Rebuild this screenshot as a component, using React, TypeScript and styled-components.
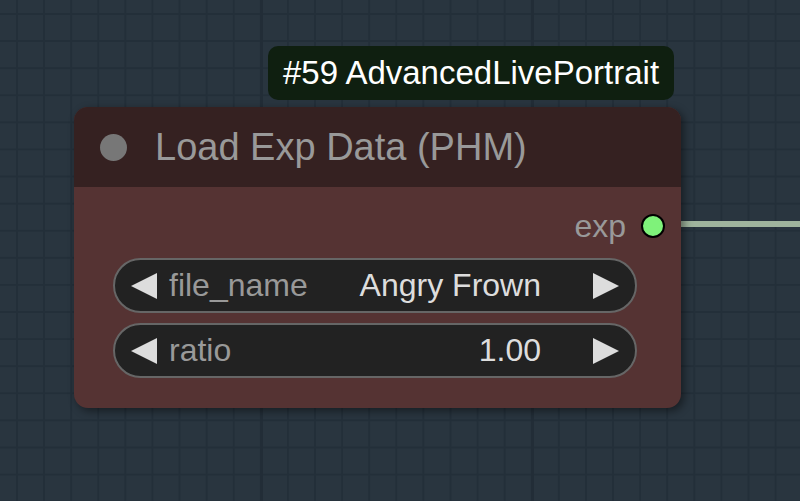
import styled, { createGlobalStyle } from "styled-components";

const GlobalStyle = createGlobalStyle`
  html, body {
    margin: 0;
    padding: 0;
    background: #29353f;
  }
  * {
    box-sizing: border-box;
  }
`;

const Canvas = styled.div`
  position: relative;
  width: 800px;
  height: 501px;
  overflow: hidden;
  font-family: "Liberation Sans", Arial, sans-serif;
  background-color: #29353f;
  background-image:
    linear-gradient(to right, #222d37 0 3px, transparent 3px),
    linear-gradient(to right, #232f39 0 2px, transparent 2px),
    linear-gradient(to bottom, #232f39 0 2px, transparent 2px);
  background-size: 271px 100%, 27.1px 27.1px, 27.1px 27.1px;
  background-position: 260px 0, 16px 0, 0 13px;
`;

const LinkWire = styled.div`
  position: absolute;
  left: 680px;
  top: 221px;
  width: 130px;
  height: 6px;
  background: #9fb49d;
`;

const Badge = styled.div`
  position: absolute;
  left: 268px;
  top: 46px;
  height: 54px;
  padding: 0 15px;
  display: flex;
  align-items: center;
  background: #0f1f10;
  border-radius: 10px;
  color: #ffffff;
  font-size: 33px;
  white-space: nowrap;
`;

const Node = styled.div`
  position: absolute;
  left: 74px;
  top: 107px;
  width: 607px;
  height: 301px;
  display: flex;
  flex-direction: column;
  background: #553333;
  border-radius: 14px;
  box-shadow: 3px 3px 8px rgba(0, 0, 0, 0.45);
  overflow: hidden;
`;

const TitleBar = styled.div`
  height: 80px;
  display: flex;
  align-items: center;
  gap: 28px;
  padding-left: 26px;
  background: #352121;
`;

const TitleDot = styled.span`
  width: 27px;
  height: 27px;
  border-radius: 50%;
  background: #777777;
`;

const TitleText = styled.span`
  color: #999999;
  font-size: 38px;
  white-space: nowrap;
`;

const Body = styled.div`
  display: flex;
  flex-direction: column;
  padding: 17px 44px 0 39px;
  gap: 10px;
`;

const OutputRow = styled.div`
  height: 44px;
  display: flex;
  align-items: center;
  justify-content: flex-end;
  gap: 15px;
  margin-right: -28px;
`;

const OutputLabel = styled.span`
  color: #999999;
  font-size: 32px;
`;

const Socket = styled.span`
  width: 24px;
  height: 24px;
  border-radius: 50%;
  background: #7ff27a;
  border: 2.5px solid #000;
`;

const Widget = styled.div`
  height: 55px;
  display: flex;
  align-items: center;
  padding: 0 16px;
  background: #222222;
  border: 2px solid #666666;
  border-radius: 28px;
  font-size: 32px;
`;

const WidgetLabel = styled.span`
  margin-left: 12px;
  color: #999999;
  flex: 1;
`;

const WidgetValue = styled.span`
  color: #dddddd;
  margin-right: 52px;
`;

function Arrow({ dir }: { dir: "left" | "right" }) {
  return (
    <svg width="26" height="26" viewBox="0 0 26 26">
      <polygon
        points={dir === "left" ? "26,0 26,26 0,13" : "0,0 0,26 26,13"}
        fill="#dddddd"
      />
    </svg>
  );
}

const widgets = [
  { label: "file_name", value: "Angry Frown" },
  { label: "ratio", value: "1.00" },
];

export default function App() {
  return (
    <>
      <GlobalStyle />
      <Canvas>
        <LinkWire />
        <Node>
          <TitleBar>
            <TitleDot />
            <TitleText>Load Exp Data (PHM)</TitleText>
          </TitleBar>
          <Body>
            <OutputRow>
              <OutputLabel>exp</OutputLabel>
              <Socket />
            </OutputRow>
            {widgets.map((w) => (
              <Widget key={w.label}>
                <Arrow dir="left" />
                <WidgetLabel>{w.label}</WidgetLabel>
                <WidgetValue>{w.value}</WidgetValue>
                <Arrow dir="right" />
              </Widget>
            ))}
          </Body>
        </Node>
        <Badge>#59 AdvancedLivePortrait</Badge>
      </Canvas>
    </>
  );
}
